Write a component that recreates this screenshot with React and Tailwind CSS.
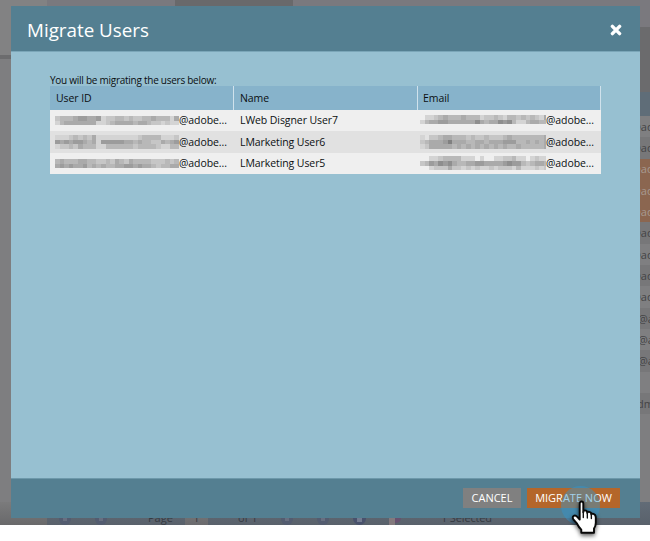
import React from "react";

// Each string is one line of mosaic cells; a hex digit is a grey level, "." is clear.
const idMosaics = [
  ["cbbba99aa9dccbbcbccbbabbbdac", "dbaaaaaaaddcbaaaabaabccdcddc"],
  ["dddcbcbcadddddddddcbbbbdddcb", "9a9a99abad99999aababbccaba9a", "dccbcabbbddbbbbbbcbbbbcddbba"],
  ["babbbaabbccbcabcabbbbcccbcba", "a9a9aa9bababbaa99a9aabcbbaaa"],
];
const mailMosaics = [
  [".ddcbabbbabbbdccbcdbbcbcbcda", "dbaa99aaaaaa8abaa898bddbaabb"],
  ["deccbaabbbcbccbcccbabbbbbbba", "cbaaa97aaabbaabaaa999bbababa", "dcaaaaabababababababbabbbbba"],
  ["..ddcbbbbddd.d..ddccbdd.dcdd", "cb9a898abbaa99aaaa9899bcbaab", "..dcccaccdcdcddcdcccdbdddcdc"],
];

function Mosaic({ lines }) {
  return (
    <div className="flex shrink-0 flex-col">
      {lines.map((line, i) => (
        <div key={i} className="flex h-[4.6px]">
          {line.split("").map((c, j) => {
            const level = Math.round(parseInt(c, 16) * 14 + 30);
            return (
              <span
                key={j}
                className="w-[4.6px] shrink-0"
                style={{ background: c === "." ? "transparent" : `rgb(${level},${level},${level})` }}
              />
            );
          })}
        </div>
      ))}
    </div>
  );
}

const names = ["LWeb Disgner User7", "LMarketing User6", "LMarketing User5"];
const rowShades = ["bg-[#efefef]", "bg-[#e1e1e1]", "bg-[#efefef]"];
const idNudge = ["mt-0", "mb-0", "mt-[1px]"];
const mailNudge = ["mb-[2px]", "mt-0", "mt-0"];

const pageRows = ["@ad", "@ad", "@ad", "@ad", "@ad", "@ad", "@ad", "@ad", "@ad", "@a", "@a", "@a", "", "dm"];

function PageBehind() {
  return (
    <div className="flex h-[525px] flex-col bg-[#7e7e80] text-[11px] text-[#444446]">
      <div className="flex min-h-0 flex-1">
        <div className="flex w-[47px] flex-col">
          <div className="h-[55px] bg-[#828283]" />
          <div className="h-1 bg-[#6c6c6e]" />
        </div>
        <div className="flex h-[27px] flex-1 bg-[#7a797e]">
          <div className="ml-[128px] w-[118px] bg-[#69696b]" />
        </div>
        <div className="flex w-[10px] flex-col">
          <div className="h-[27px] bg-[#7a797e]" />
          <div className="h-[65px] bg-[#6b6b6d]" />
          <div className="h-6 bg-[#5f6d78]" />
          {pageRows.map((t, i) => {
            const picked = i > 1 && i < 5;
            return (
              <div
                key={i}
                className={`flex h-[21.3px] items-center pt-px ${
                  picked ? "bg-[#8b6650] text-[#a79a90]" : i % 2 ? "bg-[#777779]" : "bg-[#7f7f81]"
                }`}
              >
                <span className={t === "@ad" ? "-ml-[9px]" : t === "@a" ? "-ml-[2px]" : "-ml-[3px]"}>{t}</span>
              </div>
            );
          })}
        </div>
      </div>
      <div className="flex h-[23px] items-end overflow-hidden bg-linear-to-b from-[#626c77] to-[#59616b] leading-[14px] text-[#353a41]">
        <div className="h-full w-[47px] bg-linear-to-b from-[#7b7b7c] to-[#69696b]" />
        <div className="ml-[12px] h-[8px] w-[12px] rounded-b-full bg-[#535c70]">
          <div className="ml-[4px] h-[4px] w-1 bg-[#686f80]" />
        </div>
        <div className="ml-[24px] h-[8px] w-[12px] rounded-b-full bg-[#535c70]">
          <div className="ml-[4px] h-[4px] w-1 bg-[#686f80]" />
        </div>
        <span className="ml-[41px] w-[37px]">Page</span>
        <div className="h-full w-[23px] bg-linear-to-b from-[#7b7b7c] to-[#6b6b6e] pt-[9px] text-center">1</div>
        <span className="ml-[30px] w-[43px]">of 1</span>
        <div className="h-[8px] w-[12px] rounded-b-full bg-[#535c70]">
          <div className="ml-[4px] h-[4px] w-1 bg-[#686f80]" />
        </div>
        <div className="ml-[24px] h-[8px] w-[12px] rounded-b-full bg-[#535c70]">
          <div className="ml-[4px] h-[4px] w-1 bg-[#686f80]" />
        </div>
        <div className="ml-[24px] h-[8px] w-[13px] rounded-b-full bg-[#49516c]">
          <div className="ml-[4px] h-[5px] w-[5px] bg-[#737b90]" />
        </div>
        <div className="ml-[23px] flex h-[7px] w-[12px]">
          <div className="w-[6px] bg-[#83797d]" />
          <div className="h-[5px] w-[6px] rounded-br-full bg-[#67516f]" />
        </div>
        <span className="ml-[40px] tracking-[-0.15px]">1 Selected</span>
      </div>
    </div>
  );
}

function HandCursor() {
  return (
    <svg
      viewBox="0 0 26 34"
      className="absolute top-[500px] left-[571px] h-[36px] w-[28px] [filter:drop-shadow(0_2px_2px_rgba(0,0,0,.65))]"
    >
      <path
        d="M8 3.4Q8 1.4 9.7 1.4Q11.4 1.4 11.4 3.4V11.6Q11.4 9.8 13 9.8Q15 9.8 15.2 12.2Q15.4 11 17 11.2Q18.9 11.5 19 13.6Q19.4 12.7 21 13.1Q23.2 13.8 23.2 16.5V21.5Q23.2 24.5 21.5 27V31H9.5V28Q7.2 25.8 5.5 22.4L2 18.2Q.8 16.3 2.2 15.2Q3.8 14 5.7 15.9L8 18.4Z"
        fill="white"
        stroke="#080808"
        strokeWidth="1.8"
        strokeLinejoin="round"
      />
      <path d="M11.4 11V16.5M15.2 12V17M19 13.5V17.5" stroke="#111" strokeWidth="1.3" strokeLinecap="round" />
    </svg>
  );
}

export default function App() {
  return (
    <div className="relative h-[541px] w-[650px] overflow-hidden bg-white font-['Open_Sans','Noto_Sans',sans-serif]">
      <PageBehind />
      <div className="absolute inset-0 flex items-start pt-[6px] pl-[11px]">
        <div className="flex h-[512px] w-[629px] flex-col bg-[#97c0d1] text-[#0b0f12]">
          <header className="flex h-[46px] items-center justify-between border-b border-[#7ba6b8] bg-[#547f91] pr-[18px] pl-4 text-white">
            <h1 className="pt-[3px] text-[18.8px] leading-6">Migrate Users</h1>
            <svg viewBox="0 0 12 12" className="mt-[3px] h-3 w-3">
              <path d="M2.4 2.4L9.6 9.6M9.6 2.4L2.4 9.6" stroke="white" strokeWidth="3.4" strokeLinecap="round" />
            </svg>
          </header>
          <main className="flex-1 pt-[21px] pl-[39px]">
            <p className="h-[13px] text-[10px] leading-[15px] tracking-[-0.26px] whitespace-nowrap">
              You will be migrating the users below:
            </p>
            <div className="w-[551px] text-[10.5px] tracking-[-0.08px]">
              <div className="flex h-[24px] items-center bg-[#87b3cb]">
                <div className="flex h-full w-[184px] items-center border-r border-[#d0e2ec] pt-px pl-[6px]">User ID</div>
                <div className="flex h-full w-[184px] items-center border-r border-[#d0e2ec] pt-px pl-[6px]">Name</div>
                <div className="flex h-full w-[183px] items-center border-r border-[#d0e2ec] pt-px pl-[5px]">Email</div>
              </div>
              {names.map((name, i) => (
                <div key={name} className={`flex h-[21.3px] items-center ${rowShades[i]}`}>
                  <div className="flex w-[184px] items-center pl-[5px]">
                    <div className={`w-[124px] overflow-hidden ${idNudge[i]}`}>
                      <Mosaic lines={idMosaics[i]} />
                    </div>
                    <span className="pt-px">@adobe...</span>
                  </div>
                  <div className="w-[182px] pt-px pl-[6px]">{name}</div>
                  <div className="flex w-[185px] items-center pl-[4px]">
                    <div className={`w-[126px] overflow-hidden ${mailNudge[i]}`}>
                      <Mosaic lines={mailMosaics[i]} />
                    </div>
                    <span className="pt-px">@adobe...</span>
                  </div>
                </div>
              ))}
            </div>
          </main>
          <footer className="flex h-10 items-start justify-end gap-[6px] border-t border-[#6d98aa] bg-[#547f91] pt-[9px] pr-[20px] text-[11px] text-white">
            <button className="h-5 w-[58px] bg-[#808080] leading-5">CANCEL</button>
            <button className="h-5 w-[93px] bg-[#b4662a] leading-5">MIGRATE NOW</button>
          </footer>
        </div>
      </div>
      <div className="absolute top-[486px] left-[561px] h-[39px] w-[39px] rounded-full bg-[#3197d1]/45" />
      <HandCursor />
    </div>
  );
}
